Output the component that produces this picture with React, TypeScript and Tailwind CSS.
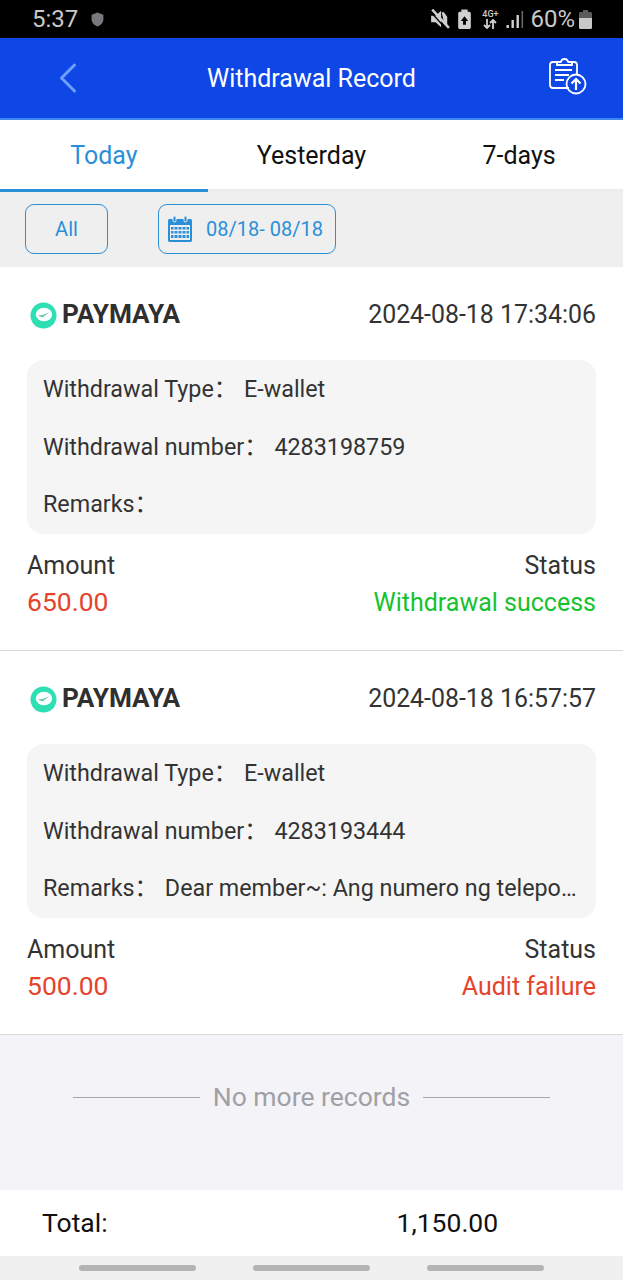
import { ChevronLeft } from 'lucide-react'

const records = [
  {
    time: '2024-08-18 17:34:06',
    number: '4283198759',
    remarks: '',
    amount: '650.00',
    status: 'Withdrawal success',
    statusClass: 'text-[#16c22e]',
  },
  {
    time: '2024-08-18 16:57:57',
    number: '4283193444',
    remarks: 'Dear member~: Ang numero ng telepono ay hindi tama',
    amount: '500.00',
    status: 'Audit failure',
    statusClass: 'text-[#e5432d]',
  },
]

function StatusBar() {
  return (
    <div className="flex h-[38px] items-center justify-between bg-black pl-[32px] pr-[31px] text-[#c9c9c9]">
      <div className="flex items-center gap-[13px]">
        <span className="text-[24px] leading-none">5:37</span>
        <svg width="13" height="15" viewBox="0 0 12 14">
          <path d="M6 0.5 11.5 2.5V7C11.5 10 9 12.5 6 13.5 3 12.5 0.5 10 0.5 7V2.5Z" fill="#77797c" />
        </svg>
      </div>
      <div className="flex items-center">
        <svg width="20" height="20" viewBox="0 0 18 18" className="mr-[8px]">
          <path d="M1 6H5L10 1.5V16.5L5 12H1Z M10.5 3H12.5L15.5 7V14H13Z" fill="#d0d0d0" />
          <path d="M2 0.5 17 17" stroke="#d0d0d0" strokeWidth="2.2" />
          <path d="M0.5 2.5 14.5 18" stroke="#000" strokeWidth="1.2" />
        </svg>
        <svg width="13" height="20" viewBox="0 0 12 19" className="mr-[10px]">
          <path d="M3 0.5H9V2.5H10.5C11.3 2.5 12 3.2 12 4V17.5C12 18.3 11.3 19 10.5 19H1.5C0.7 19 0 18.3 0 17.5V4C0 3.2 0.7 2.5 1.5 2.5H3Z" fill="#d0d0d0" />
          <path d="M6 7 9.5 11.5H7.4V15H4.6V11.5H2.5Z" fill="#000" />
        </svg>
        <div className="mr-[7px] flex w-[18px] flex-col items-center">
          <span className="text-[9px] font-medium leading-[10px] text-[#c9c9c9]">4G+</span>
          <svg width="14" height="10" viewBox="0 0 14 10" fill="none" stroke="#d0d0d0" strokeWidth="1.8">
            <path d="M4 0V9M1 6 4 9 7 6" />
            <path d="M10 10V1M7 4 10 1 13 4" />
          </svg>
        </div>
        <svg width="18" height="19" viewBox="0 0 17 19" className="mr-[6px]">
          <rect x="0" y="15" width="2.4" height="3" fill="#d0d0d0" />
          <rect x="5" y="10" width="2.4" height="8" fill="#d0d0d0" />
          <rect x="10" y="5" width="2.4" height="13" fill="#d0d0d0" />
          <rect x="15" y="1" width="1.6" height="17" fill="#666" />
        </svg>
        <span className="mr-[4px] text-[24px] leading-none">60%</span>
        <svg width="13" height="19" viewBox="0 0 13 19">
          <path d="M4 0H9V2H11.5C12.3 2 13 2.7 13 3.5V17.5C13 18.3 12.3 19 11.5 19H1.5C0.7 19 0 18.3 0 17.5V3.5C0 2.7 0.7 2 1.5 2H4Z" fill="#5c5c5c" />
          <path d="M0 8H13V17.5C13 18.3 12.3 19 11.5 19H1.5C0.7 19 0 18.3 0 17.5Z" fill="#c9c9c9" />
        </svg>
      </div>
    </div>
  )
}

function NavBar() {
  return (
    <div className="relative flex h-[82px] items-center justify-center border-b-2 border-[#3f86ee] bg-[#0f47e6] pt-[2px]">
      <ChevronLeft className="absolute left-[42px] top-[14px] text-[#6d9ffb]" size={52} strokeWidth={1.4} />
      <span className="text-[25px] text-white">Withdrawal Record</span>
      <svg width="40" height="38" viewBox="0 0 40 38" fill="none" stroke="white" strokeWidth="1.8" className="absolute left-[548px] top-[19px]">
        <path d="M21 31H5C3 31 2 30 2 28V8C2 6 3 5 5 5H9V8H24V5H26C28 5 29 6 29 8V18" strokeLinejoin="round" />
        <path d="M9 5H13C13.5 1 19.5 1 20 5H24V8H9Z" strokeLinejoin="round" />
        <path d="M7 13H24M7 18H21M7 23H16" strokeWidth="2" />
        <circle cx="28" cy="27" r="9.5" />
        <path d="M28 33V22M23.5 26.5 28 22 32.5 26.5" strokeWidth="2.2" />
      </svg>
    </div>
  )
}

function Tabs() {
  return (
    <div className="grid h-[72px] grid-cols-3 bg-white text-[25px]">
      <div className="flex items-center justify-center border-b-[3px] border-[#2b8fd8] pt-[2px] text-[#2b8fd8]">Today</div>
      <div className="flex items-center justify-center border-b-[3px] border-[#ececec] pt-[2px] text-[#111]">Yesterday</div>
      <div className="flex items-center justify-center border-b-[3px] border-[#ececec] pt-[2px] text-[#111]">7-days</div>
    </div>
  )
}

function Filters() {
  return (
    <div className="flex h-[75px] items-start gap-[50px] bg-[#efefef] pl-[25px] pt-[12px] text-[#2b8fd8]">
      <div className="flex h-[50px] w-[83px] items-center justify-center rounded-[9px] border border-[#2b8fd8] text-[20px]">All</div>
      <div className="flex h-[50px] w-[178px] items-center rounded-[9px] border border-[#2b8fd8] pl-[9px] text-[20px]">
        <svg width="24" height="26" viewBox="0 0 24 26" className="mr-[14px]">
          <path d="M1.5 3H22.5C23.3 3 24 3.7 24 4.5V24.5C24 25.3 23.3 26 22.5 26H1.5C0.7 26 0 25.3 0 24.5V4.5C0 3.7 0.7 3 1.5 3Z" fill="#2b8fd8" />
          <rect x="2" y="9" width="20" height="15" fill="#efefef" />
          <rect x="5" y="0" width="3" height="6" rx="1.5" fill="#2b8fd8" stroke="#efefef" />
          <rect x="16" y="0" width="3" height="6" rx="1.5" fill="#2b8fd8" stroke="#efefef" />
          <path d="M3 11H21V13.5H3ZM3 15H21V17.5H3ZM3 19H21V22H3Z" fill="#2b8fd8" />
          <path d="M6 10V23M10 10V23M14 10V23M18 10V23" stroke="#efefef" strokeWidth="1" />
        </svg>
        <span>08/18- 08/18</span>
      </div>
    </div>
  )
}

function PaymayaLogo() {
  return (
    <svg width="27" height="27" viewBox="0 0 28 28">
      <circle cx="14" cy="14" r="13.5" fill="#2fdfb4" />
      <ellipse cx="14.5" cy="13" rx="8.5" ry="7" fill="white" />
      <path d="M8 14 13 16 20 10.5 13 13.5Z" fill="#66c9a8" />
    </svg>
  )
}

function RecordCard({ record }: { record: (typeof records)[number] }) {
  return (
    <div className="h-[384px] border-b border-[#d9d9d9] bg-white px-[27px] pt-[32px]">
      <div className="flex h-[32px] items-center justify-between">
        <div className="flex items-center gap-[5px] pl-[3px]">
          <PaymayaLogo />
          <span className="text-[26.2px] font-bold text-[#2f2f2f]">PAYMAYA</span>
        </div>
        <span className="text-[24.9px] text-[#333]">{record.time}</span>
      </div>
      <div className="mt-[29px] flex h-[174px] flex-col justify-between rounded-[16px] bg-[#f5f5f5] py-[12px] pl-[16px] pr-[17px] text-[23.3px] text-[#333]">
        <div>Withdrawal Type：<span className="ml-[7px]">E-wallet</span></div>
        <div>Withdrawal number：<span className="ml-[7px]">{record.number}</span></div>
        <div className="truncate">Remarks：{record.remarks && <span className="ml-[7px]">{record.remarks}</span>}</div>
      </div>
      <div className="mt-[13px] flex justify-between text-[25px] leading-[37px]">
        <div>
          <div className="text-[#333]">Amount</div>
          <div className="text-[26.5px] leading-[35px] text-[#e5432d]">{record.amount}</div>
        </div>
        <div className="text-right">
          <div className="text-[#333]">Status</div>
          <div className={record.statusClass}>{record.status}</div>
        </div>
      </div>
    </div>
  )
}

export default function App() {
  return (
    <div className="flex h-[1280px] w-[623px] flex-col overflow-hidden bg-white font-['Roboto','Noto_Sans_CJK_SC',sans-serif]">
      <StatusBar />
      <NavBar />
      <Tabs />
      <Filters />
      {records.map((record) => (
        <RecordCard key={record.time} record={record} />
      ))}
      <div className="flex h-[155px] justify-center gap-[13px] bg-[#f3f3f8] pt-[44px] text-[26.5px] leading-[36px] text-[#a0a0a5]">
        <div className="mt-[18px] h-[1px] w-[127px] bg-[#a8a8ac]" />
        <span>No more records</span>
        <div className="mt-[18px] h-[1px] w-[127px] bg-[#a8a8ac]" />
      </div>
      <div className="flex h-[66px] items-center bg-white text-[26.5px] text-[#111]">
        <span className="ml-[42px]">Total:</span>
        <span className="ml-[289px]">1,150.00</span>
      </div>
      <div className="flex h-[24px] items-start justify-between bg-[#f0f0f0] px-[79px] pt-[9px]">
        <div className="h-[6px] w-[117px] rounded-full bg-[#b4b4b4]" />
        <div className="h-[6px] w-[117px] rounded-full bg-[#b4b4b4]" />
        <div className="h-[6px] w-[117px] rounded-full bg-[#b4b4b4]" />
      </div>
    </div>
  )
}
